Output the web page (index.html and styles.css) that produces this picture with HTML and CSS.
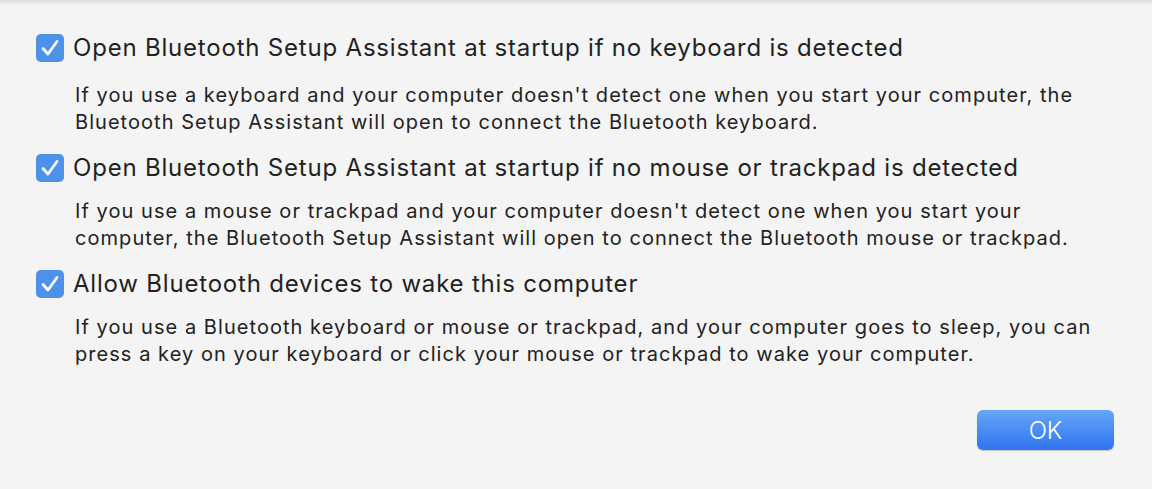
FILE: index.html
```html
<!DOCTYPE html>
<html lang="en">
<head>
    <meta charset="UTF-8">
    <title>Bluetooth Options</title>
    <link rel="stylesheet" href="styles.css">
</head>
<body>
    <div class="sheet">
        <div class="option first">
            <label class="option-title">
                <span class="check"><svg viewBox="0 0 28 28"><path d="M7 14.5 L12 20 L21 7.5" /></svg></span>
                Open Bluetooth Setup Assistant at startup if no keyboard is detected
            </label>
            <p class="option-desc">If you use a keyboard and your computer doesn't detect one when you start your computer, the<br>Bluetooth Setup Assistant will open to connect the Bluetooth keyboard.</p>
        </div>
        <div class="option">
            <label class="option-title">
                <span class="check"><svg viewBox="0 0 28 28"><path d="M7 14.5 L12 20 L21 7.5" /></svg></span>
                Open Bluetooth Setup Assistant at startup if no mouse or trackpad is detected
            </label>
            <p class="option-desc">If you use a mouse or trackpad and your computer doesn't detect one when you start your<br>computer, the Bluetooth Setup Assistant will open to connect the Bluetooth mouse or trackpad.</p>
        </div>
        <div class="option">
            <label class="option-title">
                <span class="check"><svg viewBox="0 0 28 28"><path d="M7 14.5 L12 20 L21 7.5" /></svg></span>
                Allow Bluetooth devices to wake this computer
            </label>
            <p class="option-desc">If you use a Bluetooth keyboard or mouse or trackpad, and your computer goes to sleep, you can<br>press a key on your keyboard or click your mouse or trackpad to wake your computer.</p>
        </div>
        <div class="actions">
            <button class="ok-btn">OK</button>
        </div>
    </div>
</body>
</html>
```

FILE: styles.css
```css
* {
    margin: 0;
    padding: 0;
    box-sizing: border-box;
}

body {
    background: #f4f4f4;
    font-family: Inter, "Noto Sans", sans-serif;
    color: #222;
    height: 489px;
    overflow: hidden;
}

.sheet {
    height: 100%;
    padding: 34px 37px 0 36px;
    background: linear-gradient(#dcdcdc, #f4f4f4 5px);
}

.option {
    margin-bottom: 18px;
}

.option-title {
    display: flex;
    align-items: center;
    gap: 9px;
    font-size: 24px;
    height: 28px;
    line-height: 28px;
    letter-spacing: 0.8px;
}

.check {
    width: 28px;
    height: 28px;
    border-radius: 5px;
    background: #4c91ea;
    display: flex;
    flex-shrink: 0;
}

.check svg {
    width: 28px;
    height: 28px;
}

.check path {
    fill: none;
    stroke: #fff;
    stroke-width: 2.8;
    stroke-linecap: round;
    stroke-linejoin: round;
}

.option-desc {
    margin-top: 16px;
    padding-left: 39px;
    font-size: 20px;
    line-height: 27px;
    letter-spacing: 1.05px;
    white-space: nowrap;
}

.first .option-desc {
    margin-top: 20px;
}

.actions {
    display: flex;
    justify-content: flex-end;
    margin-top: 42px;
    padding-right: 1px;
}

.ok-btn {
    width: 137px;
    height: 40px;
    border: none;
    border-radius: 6px;
    background: linear-gradient(#66a6f9, #2f74ef);
    box-shadow: 0 1px 1px rgba(0, 0, 0, 0.2);
    color: #fff;
    font-family: Inter, "Noto Sans", sans-serif;
    font-size: 24px;
    font-weight: 300;
}
```
